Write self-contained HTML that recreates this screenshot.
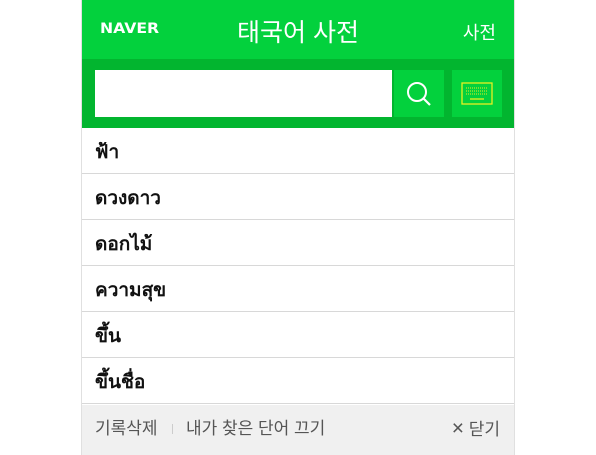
<!DOCTYPE html>
<html><head><meta charset="utf-8"><style>
*{margin:0;padding:0;box-sizing:border-box}
body{width:596px;height:455px;background:#fff;font-family:"Liberation Sans","Noto Sans CJK KR",sans-serif;position:relative;overflow:hidden}
.p{position:absolute;left:81px;width:434px;top:0;height:455px;border-left:1px solid #e0e0e0;border-right:1px solid #e0e0e0}
.h{position:absolute;left:0;top:0;width:100%;height:59px;background:#03d13d}
.naver{position:absolute;left:18px;top:21px;color:#fff;font-weight:900;font-size:14px;font-family:"DejaVu Sans",sans-serif;transform:scaleX(1.12);transform-origin:left}
.t{position:absolute;left:0;right:0;top:13px;text-align:center;color:#fff;font-size:25px}
.d{position:absolute;right:18px;top:19px;color:#fff;font-size:18px}
.s{position:absolute;left:0;top:59px;width:100%;height:69px;background:#02b52f}
.in{position:absolute;left:13px;top:11px;width:297px;height:47px;background:#fff}
.b{position:absolute;top:11px;width:50px;height:47px;background:#03d13d}
.row{position:absolute;left:0;width:100%;height:46px;border-bottom:1px solid #d8d8d8;padding-left:13px;font-size:19px;line-height:50px;color:#111;font-weight:bold}
.f{position:absolute;left:0;top:405px;width:100%;height:50px;background:#f0f0f0;color:#555;font-size:17px;line-height:48px}
</style></head><body>
<div class="p">
<div class="h"><div class="naver">NAVER</div><div class="t">태국어 사전</div><div class="d">사전</div></div>
<div class="s"><div class="in"></div>
<div class="b" style="left:312px"><svg width="50" height="47"><circle cx="23" cy="22" r="9" fill="none" stroke="#fff" stroke-width="2"/><line x1="29.5" y1="28.5" x2="36" y2="35" stroke="#fff" stroke-width="2.2"/></svg></div>
<div class="b" style="left:370px"><svg width="50" height="47"><rect x="10" y="13" width="30" height="21" fill="none" stroke="#e8f020" stroke-width="1.3"/><g stroke="#e8f020" stroke-width="1" stroke-dasharray="1 1"><line x1="14" y1="18" x2="36" y2="18"/><line x1="14" y1="21" x2="36" y2="21"/><line x1="14" y1="24" x2="36" y2="24"/></g><line x1="18" y1="29" x2="32" y2="29" stroke="#e8f020" stroke-width="1.3"/></svg></div>
</div>
<div class="row" style="top:128px">ฟ้า</div>
<div class="row" style="top:174px">ดวงดาว</div>
<div class="row" style="top:220px">ดอกไม้</div>
<div class="row" style="top:266px">ความสุข</div>
<div class="row" style="top:312px">ขึ้น</div>
<div class="row" style="top:358px">ขึ้นชื่อ</div>
<div class="f"><span style="position:absolute;left:13px">기록삭제</span><span style="position:absolute;left:90px;top:19px;width:1px;height:10px;background:#ccc"></span><span style="position:absolute;left:104px">내가 찾은 단어 끄기</span><span style="position:absolute;right:14px"><span style="font-size:21px">×</span> 닫기</span></div>
</div>
</body></html>
